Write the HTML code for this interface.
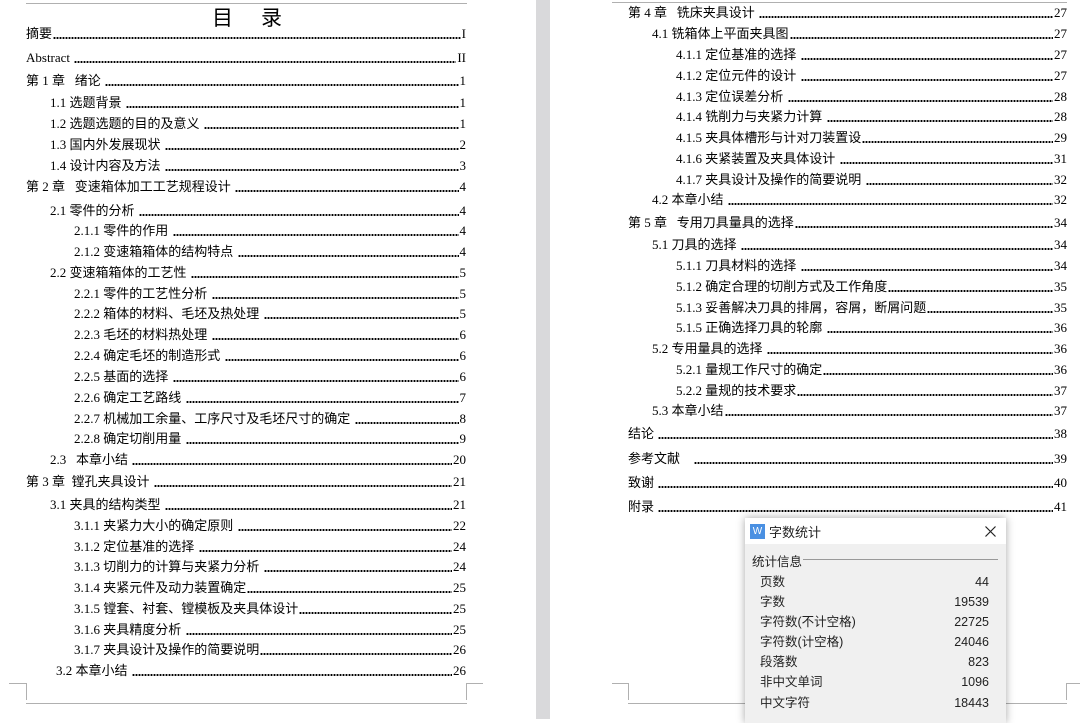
<!DOCTYPE html>
<html><head><meta charset="utf-8"><style>
*{margin:0;padding:0;box-sizing:border-box}
body{width:1085px;height:719px;overflow:hidden;background:#fff;position:relative;font-family:"Liberation Serif","Noto Sans CJK SC",serif;font-size:13px;color:#000}
.gap{position:absolute;left:536px;top:0;width:14px;height:719px;background:#d9d9db}
.r{position:absolute;height:18px;line-height:18px;display:flex;align-items:center;white-space:nowrap}
.r .d{flex:1;height:2px;margin:0 1px;background:radial-gradient(circle,#000 1px,transparent 1.2px) 0 0/3px 2px repeat-x;margin-top:7px}
.r .p{text-align:right}
.h{position:absolute;background:#b0b0b0}
.t{position:absolute;left:212px;top:2px;font-size:21px;letter-spacing:28px;font-family:"Noto Sans CJK SC",sans-serif}
.dlg{position:absolute;left:745px;top:518px;width:261px;height:205px;background:#f0f0f0;box-shadow:0 0 8px rgba(0,0,0,.35);font-family:"Liberation Sans","Noto Sans CJK SC",sans-serif;font-size:12.5px;color:#222}
.dh{height:26px;background:#fff;position:relative}
.dr{position:absolute;left:15px;width:229px;display:flex;justify-content:space-between;height:18px;line-height:18px}
</style></head><body>
<div class="gap"></div>
<div class="h" style="left:26px;top:3px;width:441px;height:1px"></div>
<div class="h" style="left:612px;top:2px;width:455px;height:1px"></div>
<div class="t">目录</div>
<div class="h" style="left:9px;top:683px;width:17px;height:1px"></div>
<div class="h" style="left:26px;top:683px;width:1px;height:17px"></div>
<div class="h" style="left:466px;top:683px;width:17px;height:1px"></div>
<div class="h" style="left:466px;top:683px;width:1px;height:17px"></div>
<div class="h" style="left:26px;top:703px;width:441px;height:1px"></div>
<div class="h" style="left:612px;top:683px;width:16px;height:1px"></div>
<div class="h" style="left:628px;top:683px;width:1px;height:17px"></div>
<div class="h" style="left:1066px;top:683px;width:14px;height:1px"></div>
<div class="h" style="left:1066px;top:683px;width:1px;height:17px"></div>
<div class="h" style="left:628px;top:703px;width:120px;height:1px"></div>
<div class="h" style="left:1006px;top:703px;width:61px;height:1px"></div>

<div id="L"></div><div id="R"></div>
<script>
function rows(data,base,right){var h='';data.forEach(function(a){var x=base+a[0]*24;var w=right-x;h+='<div class="r" style="left:'+x+'px;top:'+(a[1]-9)+'px;width:'+w+'px"><span>'+a[2]+'</span><span class="d"></span><span class="p">'+a[3]+'</span></div>';});return h;}
var L=[[0,34,'摘要','I'],[0,58,'Abstract&nbsp;','II'],[0,81,'第 1 章&nbsp;&nbsp;&nbsp;绪论&nbsp;','1'],[1,103,'1.1&nbsp;选题背景&nbsp;','1'],[1,124,'1.2&nbsp;选题选题的目的及意义&nbsp;','1'],[1,145,'1.3&nbsp;国内外发展现状&nbsp;','2'],[1,166,'1.4&nbsp;设计内容及方法&nbsp;','3'],[0,187,'第 2 章&nbsp;&nbsp;&nbsp;变速箱体加工工艺规程设计&nbsp;','4'],[1,211,'2.1&nbsp;零件的分析&nbsp;','4'],[2,231,'2.1.1&nbsp;零件的作用&nbsp;','4'],[2,252,'2.1.2&nbsp;变速箱箱体的结构特点&nbsp;','4'],[1,273,'2.2&nbsp;变速箱箱体的工艺性&nbsp;','5'],[2,294,'2.2.1&nbsp;零件的工艺性分析&nbsp;','5'],[2,314,'2.2.2&nbsp;箱体的材料、毛坯及热处理&nbsp;','5'],[2,335,'2.2.3&nbsp;毛坯的材料热处理&nbsp;','6'],[2,356,'2.2.4&nbsp;确定毛坯的制造形式&nbsp;','6'],[2,377,'2.2.5&nbsp;基面的选择&nbsp;','6'],[2,398,'2.2.6&nbsp;确定工艺路线&nbsp;','7'],[2,419,'2.2.7&nbsp;机械加工余量、工序尺寸及毛坯尺寸的确定&nbsp;','8'],[2,439,'2.2.8&nbsp;确定切削用量&nbsp;','9'],[1,460,'2.3&nbsp;&nbsp;&nbsp;本章小结&nbsp;','20'],[0,482,'第 3 章&nbsp;&nbsp;镗孔夹具设计&nbsp;','21'],[1,505,'3.1&nbsp;夹具的结构类型&nbsp;','21'],[2,526,'3.1.1&nbsp;夹紧力大小的确定原则&nbsp;','22'],[2,547,'3.1.2&nbsp;定位基准的选择&nbsp;','24'],[2,567,'3.1.3&nbsp;切削力的计算与夹紧力分析&nbsp;','24'],[2,588,'3.1.4&nbsp;夹紧元件及动力装置确定','25'],[2,609,'3.1.5&nbsp;镗套、衬套、镗模板及夹具体设计','25'],[2,630,'3.1.6&nbsp;夹具精度分析&nbsp;','25'],[2,650,'3.1.7&nbsp;夹具设计及操作的简要说明','26'],[1.25,671,'3.2&nbsp;本章小结&nbsp;','26']];
var R=[[0,13,'第 4 章&nbsp;&nbsp;&nbsp;铣床夹具设计&nbsp;','27'],[1,34,'4.1&nbsp;铣箱体上平面夹具图','27'],[2,55,'4.1.1&nbsp;定位基准的选择&nbsp;','27'],[2,76,'4.1.2 定位元件的设计&nbsp;','27'],[2,97,'4.1.3&nbsp;定位误差分析&nbsp;','28'],[2,117,'4.1.4&nbsp;铣削力与夹紧力计算&nbsp;','28'],[2,138,'4.1.5&nbsp;夹具体槽形与计对刀装置设','29'],[2,159,'4.1.6&nbsp;夹紧装置及夹具体设计&nbsp;','31'],[2,180,'4.1.7&nbsp;夹具设计及操作的简要说明&nbsp;','32'],[1,200,'4.2 本章小结&nbsp;','32'],[0,223,'第 5 章&nbsp;&nbsp;&nbsp;专用刀具量具的选择','34'],[1,245,'5.1 刀具的选择&nbsp;','34'],[2,266,'5.1.1&nbsp;刀具材料的选择&nbsp;','34'],[2,287,'5.1.2&nbsp;确定合理的切削方式及工作角度','35'],[2,308,'5.1.3 妥善解决刀具的排屑，容屑，断屑问题','35'],[2,328,'5.1.5&nbsp;正确选择刀具的轮廓&nbsp;','36'],[1,349,'5.2 专用量具的选择&nbsp;','36'],[2,370,'5.2.1&nbsp;量规工作尺寸的确定','36'],[2,391,'5.2.2&nbsp;量规的技术要求','37'],[1,411,'5.3 本章小结','37'],[0,434,'结论&nbsp;','38'],[0,459,'参考文献&nbsp;&nbsp;&nbsp;&nbsp;','39'],[0,483,'致谢&nbsp;','40'],[0,507,'附录&nbsp;','41']];
document.getElementById('L').innerHTML=rows(L,26,466);
document.getElementById('R').innerHTML=rows(R,628,1067);
</script>

<div class="dlg">
 <div class="dh">
  <div style="position:absolute;left:5px;top:6px;width:15px;height:15px;background:#4a90e2;color:#fff;font-size:10px;line-height:15px;text-align:center">W</div>
  <div style="position:absolute;left:24px;top:4px;font-size:13px">字数统计</div>
  <svg style="position:absolute;left:240px;top:8px" width="11" height="11" viewBox="0 0 11 11"><path d="M0.5 0.5L10.5 10.5M10.5 0.5L0.5 10.5" stroke="#222" stroke-width="1.2"/></svg>
 </div>
 <div style="position:absolute;left:7px;top:33px">统计信息</div>
 <div style="position:absolute;left:58px;top:41px;width:195px;height:1px;background:#999"></div>
 <div class="dr" style="top:55px"><span>页数</span><span>44</span></div>
 <div class="dr" style="top:75px"><span>字数</span><span>19539</span></div>
 <div class="dr" style="top:95px"><span>字符数(不计空格)</span><span>22725</span></div>
 <div class="dr" style="top:115px"><span>字符数(计空格)</span><span>24046</span></div>
 <div class="dr" style="top:135px"><span>段落数</span><span>823</span></div>
 <div class="dr" style="top:155px"><span>非中文单词</span><span>1096</span></div>
 <div class="dr" style="top:176px"><span>中文字符</span><span>18443</span></div>
</div>
</body></html>
